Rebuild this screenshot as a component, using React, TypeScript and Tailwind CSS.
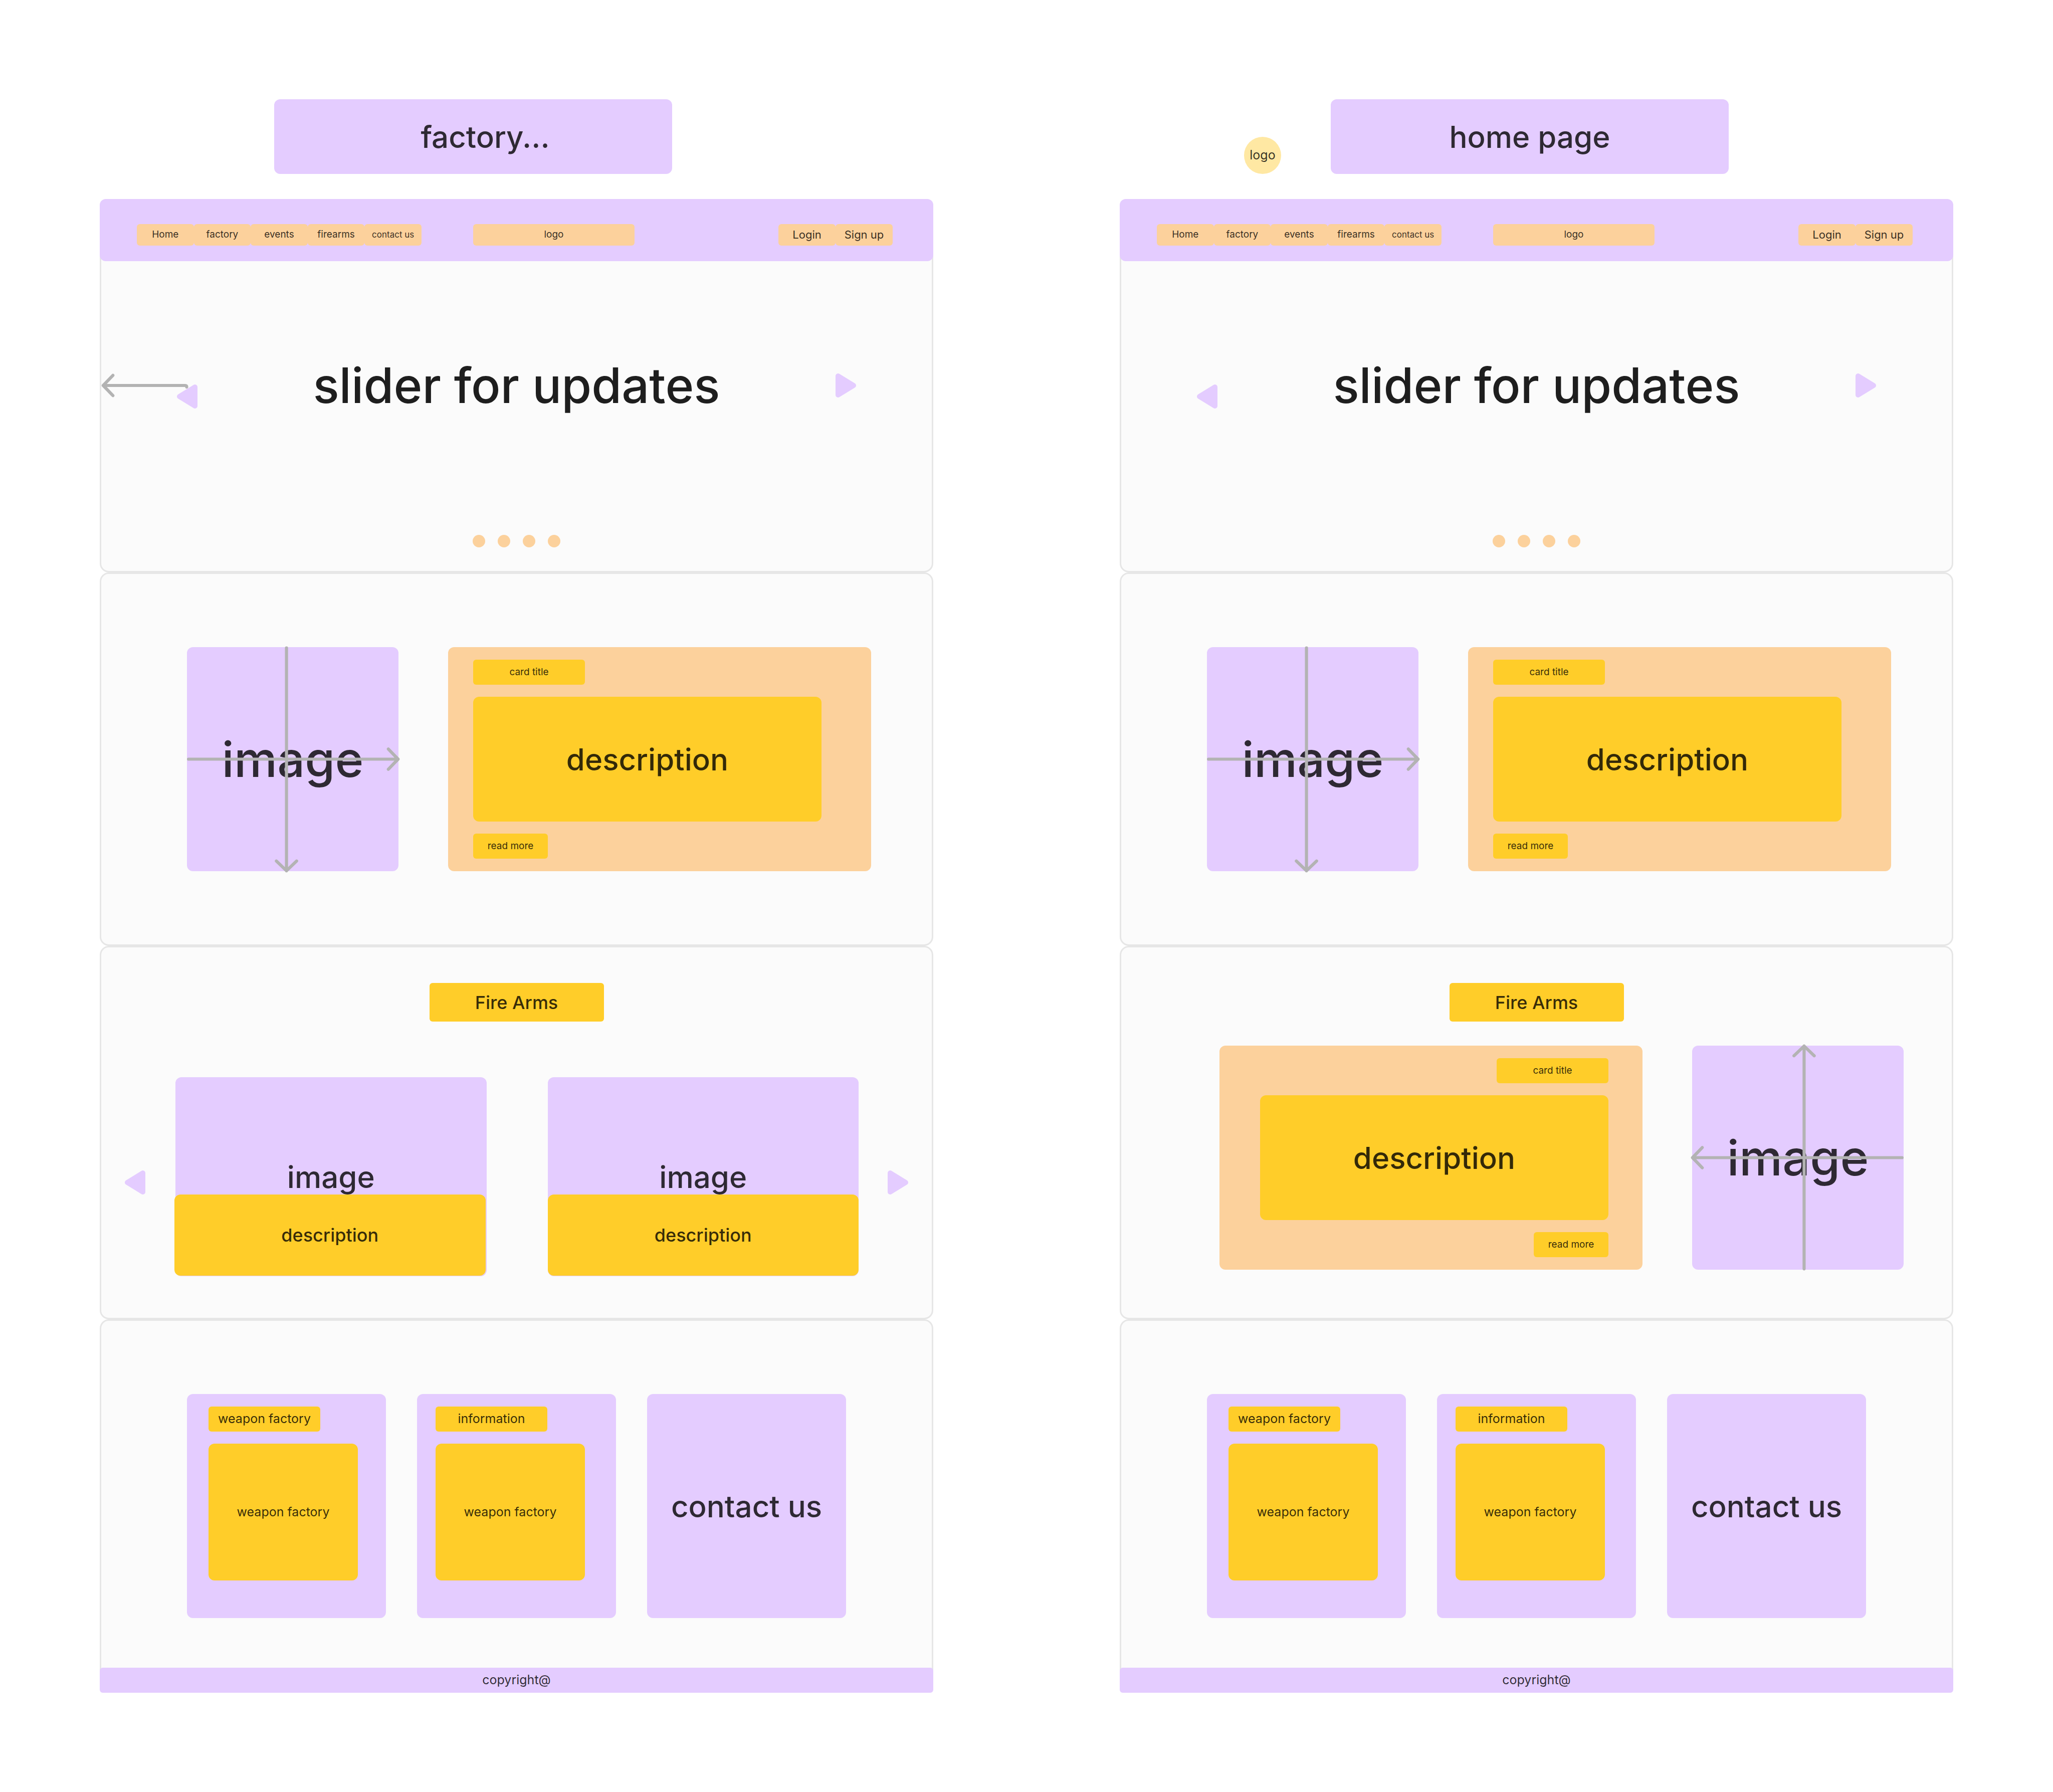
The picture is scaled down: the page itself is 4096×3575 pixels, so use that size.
import type { ReactNode } from "react";

const NAV_LINKS = ["Home", "factory", "events", "firearms"];
const SLIDES = [1, 2, 3, 4];

function Triangle({ direction }: { direction: "left" | "right" }) {
  return (
    <svg
      viewBox="0 0 42 50"
      className="block h-[50px] w-[42px] fill-[#e4ccff] stroke-[#e4ccff]"
      strokeWidth="10"
      strokeLinejoin="round"
      aria-hidden="true"
    >
      <path d={direction === "left" ? "M37 6V44L6 25Z" : "M5 6V44L36 25Z"} />
    </svg>
  );
}

function CrossArrows({ flipped = false }: { flipped?: boolean }) {
  return (
    <svg
      viewBox="0 0 544 576"
      className={
        flipped
          ? "absolute inset-0 h-full w-full rotate-180 overflow-visible stroke-[#b3b3b3]"
          : "absolute inset-0 h-full w-full overflow-visible stroke-[#b3b3b3]"
      }
      fill="none"
      strokeWidth="8"
      strokeLinecap="round"
      strokeLinejoin="round"
      aria-hidden="true"
    >
      <path d="M4 288H543M518 262L543 288L518 314" />
      <path d="M256 2V575M230 550L256 575L282 550" />
    </svg>
  );
}

function PageTitle({ children }: { children: ReactNode }) {
  return (
    <h1 className="flex h-[149px] w-[794px] items-center justify-center rounded-xl bg-[#e4ccff] text-[60px] font-medium text-black/80">
      {children}
    </h1>
  );
}

function Section({ children }: { children: ReactNode }) {
  return (
    <section className="relative flex min-h-[745px] flex-col rounded-[18px] border-3 border-[#e6e6e6] bg-[#fbfbfb]">
      {children}
    </section>
  );
}

function SiteHeader() {
  return (
    <header className="-mx-[3px] -mt-[3px] flex h-[124px] items-start rounded-xl bg-[#e4ccff] pt-[50px] pr-[81px] pl-[74px] text-[19px] text-black/80">
      <nav className="grid w-[568px] grid-cols-5">
        {NAV_LINKS.map((label) => (
          <a key={label} href="#" className="flex h-[43px] items-center justify-center rounded-md bg-[#fcd19c]">
            {label}
          </a>
        ))}
        <a href="#" className="flex h-[43px] items-center justify-center rounded-md bg-[#fcd19c] text-[17px]">
          contact us
        </a>
      </nav>
      <a href="#" className="ml-[103px] flex h-[43px] w-[322px] items-center justify-center rounded-md bg-[#fcd19c]">
        logo
      </a>
      <div className="ml-auto grid w-[228px] grid-cols-2 text-[22px]">
        <button type="button" className="h-[43px] rounded-md bg-[#fcd19c]">
          Login
        </button>
        <button type="button" className="h-[43px] rounded-md bg-[#fcd19c]">
          Sign up
        </button>
      </div>
    </header>
  );
}

function SliderSection({ withPointer = false }: { withPointer?: boolean }) {
  return (
    <Section>
      <SiteHeader />
      <div className="relative flex h-[496px] items-center justify-between px-[150px]">
        {withPointer && (
          <svg
            viewBox="0 0 240 64"
            className="absolute left-0 h-[50px] w-[186px] stroke-[#b3b3b3]"
            fill="none"
            strokeWidth="8"
            strokeLinecap="round"
            strokeLinejoin="round"
            aria-hidden="true"
          >
            <path d="M30 6L5 32L30 58M5 32H216Q220 32 220 36" />
          </svg>
        )}
        <button type="button" aria-label="Previous update" className="relative mt-11">
          <Triangle direction="left" />
        </button>
        <h2 className="text-[97px] font-medium text-[#1e1e1e]">slider for updates</h2>
        <button type="button" aria-label="Next update">
          <Triangle direction="right" />
        </button>
      </div>
      <div className="mt-[50px] flex justify-center gap-[25px]">
        {SLIDES.map((slide) => (
          <button
            key={slide}
            type="button"
            aria-label={`Slide ${slide}`}
            className="size-[25px] rounded-full bg-[#fcd19c]"
          />
        ))}
      </div>
    </Section>
  );
}

function ImageBox({ flipped = false }: { flipped?: boolean }) {
  return (
    <div className="relative flex h-[447px] items-center justify-center rounded-xl bg-[#e4ccff] text-[97px] font-medium text-black/80">
      image
      <CrossArrows flipped={flipped} />
    </div>
  );
}

function InfoCard({ alignRight = false }: { alignRight?: boolean }) {
  return (
    <article
      className={
        alignRight
          ? "flex h-[447px] flex-col items-end gap-6 rounded-xl bg-[#fcd19c] pt-[25px] pr-[68px] pl-[81px] text-black/80"
          : "flex h-[447px] flex-col items-start gap-6 rounded-xl bg-[#fcd19c] pt-[25px] pr-[99px] pl-[50px] text-black/80"
      }
    >
      <h3 className="flex h-[50px] w-[223px] items-center justify-center rounded-md bg-[#ffcd29] text-[19px]">
        card title
      </h3>
      <p className="flex h-[249px] w-full items-center justify-center rounded-xl bg-[#ffcd29] text-[60px] font-medium">
        description
      </p>
      <button type="button" className="h-[50px] w-[149px] rounded-md bg-[#ffcd29] text-[19px]">
        read more
      </button>
    </article>
  );
}

function FeatureSection() {
  return (
    <Section>
      <div className="grid grid-cols-[1fr_2fr] gap-[99px] pt-[146px] pr-[121px] pb-[146px] pl-[171px]">
        <ImageBox />
        <InfoCard />
      </div>
    </Section>
  );
}

function FireArmsTitle() {
  return (
    <h2 className="mx-auto mt-[71px] flex h-[77px] w-[348px] items-center justify-center rounded-md bg-[#ffcd29] text-[36px] font-medium text-black/80">
      Fire Arms
    </h2>
  );
}

function CarouselCard({ shifted = false }: { shifted?: boolean }) {
  return (
    <article className="relative h-[397px] flex-1 font-medium">
      <div
        className={
          shifted
            ? "-mr-0.5 ml-0.5 flex h-full items-center justify-center rounded-xl bg-[#e4ccff] text-[60px] text-black/80"
            : "flex h-full items-center justify-center rounded-xl bg-[#e4ccff] text-[60px] text-black/80"
        }
      >
        image
      </div>
      <p className="absolute inset-x-0 bottom-px flex h-[162px] items-center justify-center rounded-xl bg-[#ffcd29] text-[36px] text-black/80">
        description
      </p>
    </article>
  );
}

function FireArmsCarousel() {
  return (
    <Section>
      <FireArmsTitle />
      <div className="mt-[111px] flex items-center px-[46px]">
        <button type="button" aria-label="Previous fire arm" className="mt-[22px] mr-[58px]">
          <Triangle direction="left" />
        </button>
        <div className="flex flex-1 gap-[124px]">
          <CarouselCard shifted />
          <CarouselCard />
        </div>
        <button type="button" aria-label="Next fire arm" className="mt-[22px] ml-[58px]">
          <Triangle direction="right" />
        </button>
      </div>
    </Section>
  );
}

function FireArmsFeature() {
  return (
    <Section>
      <FireArmsTitle />
      <div className="mt-12 grid grid-cols-[2fr_1fr] gap-[99px] pr-24 pl-[196px]">
        <InfoCard alignRight />
        <ImageBox flipped />
      </div>
    </Section>
  );
}

function FooterSection() {
  return (
    <Section>
      <div className="grid grid-cols-3 gap-[62px] px-[171px] pt-[146px] text-[25px] text-black/80">
        <article className="flex h-[447px] flex-col gap-6 rounded-xl bg-[#e4ccff] pt-[25px] pl-[43px]">
          <h3 className="flex h-[50px] w-[223px] items-center justify-center rounded-md bg-[#ffcd29]">
            weapon factory
          </h3>
          <p className="flex h-[273px] w-[298px] items-center justify-center rounded-xl bg-[#ffcd29]">
            weapon factory
          </p>
        </article>
        <article className="flex h-[447px] flex-col gap-6 rounded-xl bg-[#e4ccff] pt-[25px] pl-[37px]">
          <h3 className="flex h-[50px] w-[223px] items-center justify-center rounded-md bg-[#ffcd29]">
            information
          </h3>
          <p className="flex h-[273px] w-[298px] items-center justify-center rounded-xl bg-[#ffcd29]">
            weapon factory
          </p>
        </article>
        <article className="flex h-[447px] items-center justify-center rounded-xl bg-[#e4ccff] text-[60px] font-medium">
          contact us
        </article>
      </div>
      <footer className="-mx-[3px] mt-auto -mb-[3px] flex h-[50px] items-center justify-center rounded-md bg-[#e4ccff] text-[25px] text-black/80">
        copyright@
      </footer>
    </Section>
  );
}

export default function App() {
  return (
    <div className="flex min-h-screen gap-[372px] bg-white px-[199px] pt-[198px] pb-[198px] font-['Inter',sans-serif]">
      <main className="min-w-0 flex-1">
        <div className="mb-[50px] flex items-end pl-[348px]">
          <PageTitle>
            <span className="pl-12">factory...</span>
          </PageTitle>
        </div>
        <SliderSection withPointer />
        <FeatureSection />
        <FireArmsCarousel />
        <FooterSection />
      </main>
      <main className="min-w-0 flex-1">
        <div className="mb-[50px] flex items-end gap-[99px] pl-[248px]">
          <div className="flex size-[74px] items-center justify-center rounded-full bg-[#ffe8a3] text-[25px] text-black/80">
            logo
          </div>
          <PageTitle>home page</PageTitle>
        </div>
        <SliderSection />
        <FeatureSection />
        <FireArmsFeature />
        <FooterSection />
      </main>
    </div>
  );
}
